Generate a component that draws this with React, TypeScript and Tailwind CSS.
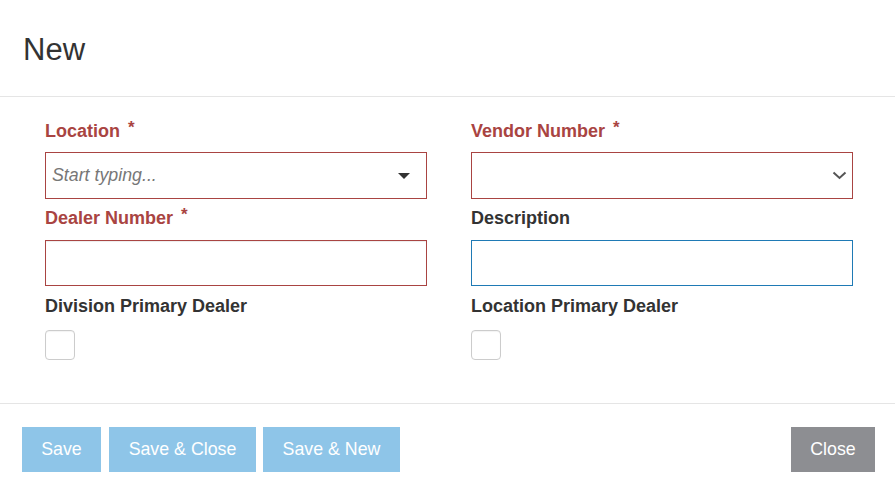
import React from "react";

const Req = () => (
  <span className="ml-[8px] text-[17px] leading-[0] align-[4px]">*</span>
);

function Label({ text, required }: { text: string; required?: boolean }) {
  return (
    <div
      className={`h-[20px] text-[18px] leading-[20px] font-bold whitespace-nowrap ${
        required ? "text-[#a94442]" : "text-[#333333]"
      }`}
    >
      {text}
      {required ? <Req /> : null}
    </div>
  );
}

export default function App() {
  return (
    <div className="w-[895px] h-[493px] bg-white overflow-hidden font-['Liberation_Sans',Arial,sans-serif] text-[#333333]">
      {/* Header */}
      <div className="h-[97px] border-b border-[#e5e5e5] pl-[23px] pt-[34px]">
        <div className="text-[31px] leading-[31px] font-normal text-[#333333]">New</div>
      </div>

      {/* Body */}
      <div className="h-[306px] pl-[45px] pr-[42px] pt-[24px]">
        <div className="grid grid-cols-[382px_382px] gap-x-[44px]">
          {/* Left column */}
          <div className="flex flex-col">
            <Label text="Location" required />
            <div className="mt-[11px] h-[47px] border border-[#a94442] flex items-center justify-between pl-[6px] pr-[16px]">
              <span className="italic text-[17.8px] text-[#777777]">Start typing...</span>
              <svg width="12" height="6" viewBox="0 0 12 6">
                <path d="M0 0 L12 0 L6 6 Z" fill="#333333" />
              </svg>
            </div>
            <div className="mt-[9px]">
              <Label text="Dealer Number" required />
            </div>
            <div className="mt-[12px] h-[46px] border border-[#a94442] shadow-[inset_0_1px_1px_rgba(0,0,0,0.075)]"></div>
            <div className="mt-[10px]">
              <Label text="Division Primary Dealer" />
            </div>
            <div className="mt-[14px] w-[30px] h-[30px] border border-[#cccccc] rounded-[4px] bg-white shadow-[inset_0_1px_1px_rgba(0,0,0,0.05)]"></div>
          </div>

          {/* Right column */}
          <div className="flex flex-col">
            <Label text="Vendor Number" required />
            <div className="mt-[11px] h-[47px] border border-[#a94442] flex items-center justify-end pr-[5px]">
              <svg width="15" height="9" viewBox="0 0 15 9">
                <path d="M1.5 1.5 L7.5 7 L13.5 1.5" fill="none" stroke="#555555" strokeWidth="2" />
              </svg>
            </div>
            <div className="mt-[9px]">
              <Label text="Description" />
            </div>
            <div className="mt-[12px] h-[46px] border border-[#1f7ab5]"></div>
            <div className="mt-[10px]">
              <Label text="Location Primary Dealer" />
            </div>
            <div className="mt-[14px] w-[30px] h-[30px] border border-[#cccccc] rounded-[4px] bg-white shadow-[inset_0_1px_1px_rgba(0,0,0,0.05)]"></div>
          </div>
        </div>
      </div>

      {/* Footer */}
      <div className="border-t border-[#e5e5e5] pl-[22px] pr-[20px] pt-[23px] flex justify-between">
        <div className="flex">
          <button className="w-[79px] h-[45px] bg-[#8ec5e8] text-white text-[17.8px] flex items-center justify-center">
            Save
          </button>
          <button className="ml-[8px] w-[147px] h-[45px] bg-[#8ec5e8] text-white text-[17.8px] flex items-center justify-center">
            Save &amp; Close
          </button>
          <button className="ml-[7px] w-[137px] h-[45px] bg-[#8ec5e8] text-white text-[17.8px] flex items-center justify-center">
            Save &amp; New
          </button>
        </div>
        <button className="w-[84px] h-[45px] bg-[#8d8e92] text-white text-[17.8px] flex items-center justify-center">
          Close
        </button>
      </div>
    </div>
  );
}
